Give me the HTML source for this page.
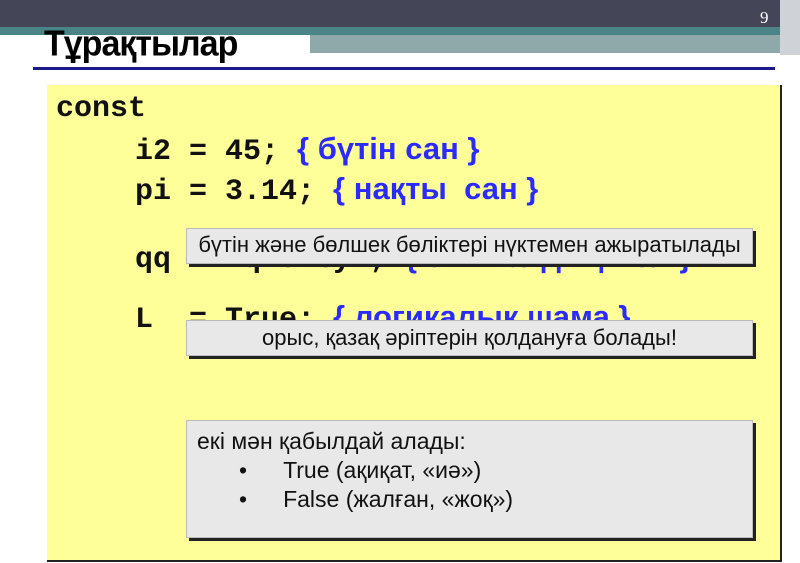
<!DOCTYPE html>
<html><head><meta charset="utf-8"><style>
body{margin:0;width:800px;height:563px;position:relative;overflow:hidden;background:#fff;font-family:"Liberation Sans",sans-serif}
.a{position:absolute}
.code{font-family:"Liberation Mono",monospace;font-weight:bold;font-size:30px;color:#111;white-space:pre}
.cm{font-family:"Liberation Sans",sans-serif;font-weight:bold;color:#2b2bff;font-size:31px}
.box{position:absolute;background:#e8e8e8;border:1px solid #bbb;box-shadow:3px 3px 0 #222;font-size:22px;color:#111;white-space:nowrap}
</style></head><body>
<div class="a" style="left:0;top:0;width:800px;height:27px;background:#454558"></div>
<div class="a" style="left:0;top:27px;width:800px;height:8px;background:#4a8486"></div>
<div class="a" style="left:310px;top:35px;width:470px;height:18px;background:#8fa9ab"></div>
<div class="a" style="left:780px;top:0;width:20px;height:55px;background:#cfd2d6"></div>
<div class="a" style="left:760px;top:8px;color:#fff;font-family:'Liberation Serif',serif;font-size:17px">9</div>
<div class="a" style="left:44px;top:24px;font-size:34px;font-weight:bold;color:#000;letter-spacing:-1px;transform:scaleY(1.05);transform-origin:left top">Тұрақтылар</div>
<div class="a" style="left:33px;top:67px;width:742px;height:3px;background:#1a1a8a"></div>
<div class="a" style="left:47px;top:85px;width:733px;height:475px;background:#ffff99;border-right:2px solid #222;border-bottom:2px solid #222"></div>
<div class="a code" style="left:56px;top:92px">const</div>
<div class="a code" style="left:135px;top:131px">i2 = 45; <span class="cm">{ бүтін сан }</span></div>
<div class="a code" style="left:135px;top:171px">pi = 3.14; <span class="cm">{ нақты  сан }</span></div>
<div class="a code" style="left:135px;top:239px">qq = 'qwerty'; <span class="cm">{ символдық жол }</span></div>
<div class="a code" style="left:135px;top:299px">L  = True; <span class="cm">{ логикалық шама }</span></div>
<div class="box" style="left:186px;top:228px;width:565px;height:34px;line-height:32px;text-align:center">бүтін және бөлшек бөліктері нүктемен ажыратылады</div>
<div class="box" style="left:186px;top:320px;width:565px;height:34px;line-height:34px;text-align:center">орыс, қазақ әріптерін қолдануға болады!</div>
<div class="box" style="left:186px;top:420px;width:565px;height:116px;line-height:29px;font-size:23px">
<div style="padding:6px 0 0 10px">екі мән қабылдай алады:</div>
<div style="padding-left:52px">•<span style="padding-left:36px">True (ақиқат, «иә»)</span></div>
<div style="padding-left:52px">•<span style="padding-left:36px">False (жалған, «жоқ»)</span></div>
</div>
</body></html>
